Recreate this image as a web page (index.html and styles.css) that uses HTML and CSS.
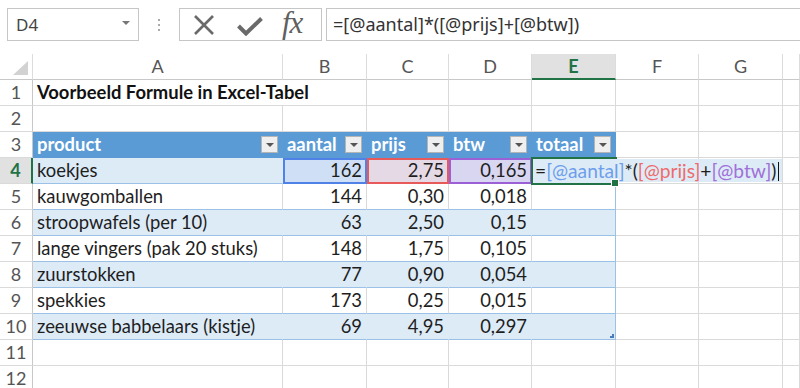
FILE: index.html
```html
<!DOCTYPE html>
<html lang="nl">
<head>
  <meta charset="UTF-8" />
  <title>Voorbeeld Formule in Excel-Tabel</title>
  <link rel="stylesheet" href="styles.css">
</head>
<body>

  <!-- Formulebalk -->
  <div class="toolbar">
    <div class="namebox">
      <span>D4</span>
      <i class="namebox-arrow"></i>
    </div>
    <div class="grip"><i></i><i></i><i></i></div>
    <div class="fx-buttons">
      <svg class="icon-x" width="22" height="20" viewBox="0 0 22 20">
        <path d="M2 1 L20 19 M20 1 L2 19" stroke="#6a6a6a" stroke-width="2.6" fill="none"/>
      </svg>
      <svg class="icon-check" width="26" height="20" viewBox="0 0 26 20">
        <path d="M1.5 10 L9 17.5 L24.5 2.5" stroke="#6a6a6a" stroke-width="4" fill="none"/>
      </svg>
      <span class="fx">fx</span>
    </div>
    <div class="formula">=[@aantal]*([@prijs]+[@btw])</div>
  </div>

  <!-- Werkblad -->
  <div class="sheet">
    <div class="row colhead">
      <div class="cell corner"><i></i></div>
      <div class="cell">A</div>
      <div class="cell">B</div>
      <div class="cell">C</div>
      <div class="cell">D</div>
      <div class="cell active-col">E</div>
      <div class="cell">F</div>
      <div class="cell">G</div>
      <div class="cell"></div>
    </div>

    <div class="row">
      <div class="cell rh">1</div>
      <div class="cell title">Voorbeeld Formule in Excel-Tabel</div>
      <div class="cell"></div>
      <div class="cell"></div>
      <div class="cell"></div>
      <div class="cell"></div>
      <div class="cell"></div>
      <div class="cell"></div>
    </div>

    <div class="row">
      <div class="cell rh">2</div>
      <div class="cell"></div>
      <div class="cell"></div>
      <div class="cell"></div>
      <div class="cell"></div>
      <div class="cell"></div>
      <div class="cell"></div>
      <div class="cell"></div>
      <div class="cell"></div>
    </div>

    <div class="row">
      <div class="cell rh">3</div>
      <div class="cell th">product<b class="filter"></b></div>
      <div class="cell th">aantal<b class="filter"></b></div>
      <div class="cell th">prijs<b class="filter"></b></div>
      <div class="cell th">btw<b class="filter"></b></div>
      <div class="cell th">totaal<b class="filter"></b></div>
      <div class="cell"></div>
      <div class="cell"></div>
      <div class="cell"></div>
    </div>

    <div class="row">
      <div class="cell rh active-row">4</div>
      <div class="cell td band">koekjes</div>
      <div class="cell td band num ref-blue">162</div>
      <div class="cell td band num ref-red">2,75</div>
      <div class="cell td band num ref-purple">0,165</div>
      <div class="cell td band last editing">
        <span class="editor">=<span class="c-blue">[@aantal]</span>*(<span class="c-red">[@prijs]</span>+<span class="c-purple">[@btw]</span>)<i class="caret"></i></span>
        <i class="fill-handle"></i>
      </div>
      <div class="cell"></div>
      <div class="cell"></div>
      <div class="cell"></div>
    </div>

    <div class="row">
      <div class="cell rh">5</div>
      <div class="cell td">kauwgomballen</div>
      <div class="cell td num">144</div>
      <div class="cell td num">0,30</div>
      <div class="cell td num">0,018</div>
      <div class="cell td last"></div>
      <div class="cell"></div>
      <div class="cell"></div>
      <div class="cell"></div>
    </div>

    <div class="row">
      <div class="cell rh">6</div>
      <div class="cell td band">stroopwafels (per 10)</div>
      <div class="cell td band num">63</div>
      <div class="cell td band num">2,50</div>
      <div class="cell td band num">0,15</div>
      <div class="cell td band last"></div>
      <div class="cell"></div>
      <div class="cell"></div>
      <div class="cell"></div>
    </div>

    <div class="row">
      <div class="cell rh">7</div>
      <div class="cell td">lange vingers (pak 20 stuks)</div>
      <div class="cell td num">148</div>
      <div class="cell td num">1,75</div>
      <div class="cell td num">0,105</div>
      <div class="cell td last"></div>
      <div class="cell"></div>
      <div class="cell"></div>
      <div class="cell"></div>
    </div>

    <div class="row">
      <div class="cell rh">8</div>
      <div class="cell td band">zuurstokken</div>
      <div class="cell td band num">77</div>
      <div class="cell td band num">0,90</div>
      <div class="cell td band num">0,054</div>
      <div class="cell td band last"></div>
      <div class="cell"></div>
      <div class="cell"></div>
      <div class="cell"></div>
    </div>

    <div class="row">
      <div class="cell rh">9</div>
      <div class="cell td">spekkies</div>
      <div class="cell td num">173</div>
      <div class="cell td num">0,25</div>
      <div class="cell td num">0,015</div>
      <div class="cell td last"></div>
      <div class="cell"></div>
      <div class="cell"></div>
      <div class="cell"></div>
    </div>

    <div class="row">
      <div class="cell rh">10</div>
      <div class="cell td band">zeeuwse babbelaars (kistje)</div>
      <div class="cell td band num">69</div>
      <div class="cell td band num">4,95</div>
      <div class="cell td band num">0,297</div>
      <div class="cell td band last table-end"><i class="resize"></i></div>
      <div class="cell"></div>
      <div class="cell"></div>
      <div class="cell"></div>
    </div>

    <div class="row">
      <div class="cell rh">11</div>
      <div class="cell"></div>
      <div class="cell"></div>
      <div class="cell"></div>
      <div class="cell"></div>
      <div class="cell"></div>
      <div class="cell"></div>
      <div class="cell"></div>
      <div class="cell"></div>
    </div>

    <div class="row">
      <div class="cell rh">12</div>
      <div class="cell"></div>
      <div class="cell"></div>
      <div class="cell"></div>
      <div class="cell"></div>
      <div class="cell"></div>
      <div class="cell"></div>
      <div class="cell"></div>
      <div class="cell"></div>
    </div>
  </div>

</body>
</html>
```

FILE: styles.css
```css
body {
  margin: 0;
  background: white;
  font-family: Lato, 'Liberation Sans', sans-serif;
  color: #1e1e1e;
  overflow: hidden;
}

/* FORMULEBALK */
.toolbar {
  display: flex;
  height: 54px;
  box-sizing: border-box;
  padding: 8px 0 0 7px;
}

.namebox,
.fx-buttons,
.formula {
  height: 33px;
  box-sizing: border-box;
  border: 1px solid #c6c6c6;
}

.namebox {
  width: 132px;
  display: flex;
  align-items: center;
  justify-content: space-between;
  padding: 0 8px 0 8px;
  font-family: 'Noto Sans', sans-serif;
  font-size: 17px;
  color: #444;
}

.namebox-arrow {
  width: 0;
  height: 0;
  border-left: 4px solid transparent;
  border-right: 4px solid transparent;
  border-top: 4px solid #777;
  margin-top: -4px;
}

.grip {
  width: 40px;
  display: flex;
  flex-direction: column;
  align-items: center;
  justify-content: center;
  gap: 3px;
  height: 33px;
}

.grip i {
  width: 2px;
  height: 2px;
  background: #aaa;
}

.fx-buttons {
  width: 143px;
  display: flex;
  align-items: center;
  padding-left: 13px;
}

.icon-x {
  margin-right: 22px;
}

.icon-check {
  margin-right: 19px;
  margin-top: 2px;
}

.fx {
  font-family: 'Liberation Serif', serif;
  font-style: italic;
  font-size: 31px;
  color: #606060;
  letter-spacing: -1px;
  margin-top: -4px;
}

.formula {
  flex: 1;
  margin-left: 4px;
  border-right: none;
  padding-left: 6px;
  line-height: 31px;
  font-family: 'Noto Sans', sans-serif;
  font-size: 18px;
  color: #333;
  white-space: nowrap;
}

/* WERKBLAD */
.row {
  display: grid;
  grid-template-columns: 33px 250px 84px 82px 83px 84px 83px 84px 1fr;
  height: 26px;
}

.cell {
  position: relative;
  box-sizing: border-box;
  border-right: 1px solid #dadada;
  border-bottom: 1px solid #dadada;
  padding: 0 4px;
  line-height: 25px;
  font-size: 18.4px;
  white-space: nowrap;
  overflow: hidden;
}

.colhead .cell {
  text-align: center;
  color: #555;
  font-size: 18px;
  border-right-color: #dcdcdc;
  border-bottom-color: #c8c8c8;
}

.colhead .active-col {
  background: #e1e1e1;
  color: #217346;
  font-weight: bold;
  border-bottom: 2px solid #217346;
}

.corner i {
  position: absolute;
  right: 4px;
  bottom: 4px;
  width: 0;
  height: 0;
  border-left: 15px solid transparent;
  border-bottom: 14px solid #d2d2d2;
}

.rh {
  text-align: center;
  color: #555;
  font-size: 18px;
  padding: 0;
  border-right-color: #c8c8c8;
}

.rh.active-row {
  background: #e1e1e1;
  color: #217346;
  font-weight: bold;
  border-right: 2px solid #217346;
}

.title {
  grid-column: span 2;
  font-weight: bold;
  color: #111;
}

/* TABEL */
.th {
  background: #5b9bd5;
  color: white;
  font-weight: bold;
  border-right-color: #5b9bd5;
  border-bottom-color: #5b9bd5;
}

.filter {
  position: absolute;
  right: 4px;
  top: 4px;
  width: 17px;
  height: 17px;
  box-sizing: border-box;
  background: #efefef;
  border: 1px solid #b4b4b4;
}

.filter::after {
  content: '';
  position: absolute;
  left: 4px;
  top: 6px;
  border-left: 4px solid transparent;
  border-right: 4px solid transparent;
  border-top: 4px solid #555;
}

.td {
  border-bottom-color: #9bc2e6;
}

.band {
  background: #ddebf7;
  border-right-color: #ddebf7;
}

.td.last {
  border-right-color: #9bc2e6;
}

.num {
  text-align: right;
}

.ref-blue {
  background: #cfe0f6;
  outline: 2px solid #4f81e6;
  outline-offset: -2px;
}

.ref-red {
  background: #e5d9e6;
  outline: 2px solid #e85a5a;
  outline-offset: -2px;
}

.ref-purple {
  background: #d8d6f1;
  outline: 2px solid #9b5fd6;
  outline-offset: -2px;
}

/* ACTIEVE CEL IN BEWERKING */
.editing {
  overflow: visible;
  outline: 2px solid #217346;
  outline-offset: -1px;
  z-index: 2;
}

.editor {
  position: absolute;
  left: 1px;
  top: 1px;
  width: 249px;
  height: 23px;
  background: #ddebf7;
  padding-left: 2px;
  line-height: 23px;
  box-sizing: border-box;
  font-size: 19.2px;
  color: #1e1e1e;
}

.c-blue { color: #6d9eeb; }
.c-red { color: #ee6b6b; }
.c-purple { color: #a070d8; }

.caret {
  display: inline-block;
  width: 1px;
  height: 19px;
  background: #111;
  vertical-align: -3px;
  margin-left: 2px;
}

.fill-handle {
  position: absolute;
  right: -4px;
  bottom: -4px;
  width: 6px;
  height: 6px;
  background: #217346;
  border: 1px solid white;
}

.table-end {
  overflow: visible;
}

.resize {
  position: absolute;
  right: 1px;
  bottom: 1px;
  width: 4px;
  height: 4px;
  border-right: 2px solid #4a7ebb;
  border-bottom: 2px solid #4a7ebb;
  box-sizing: border-box;
}
```
